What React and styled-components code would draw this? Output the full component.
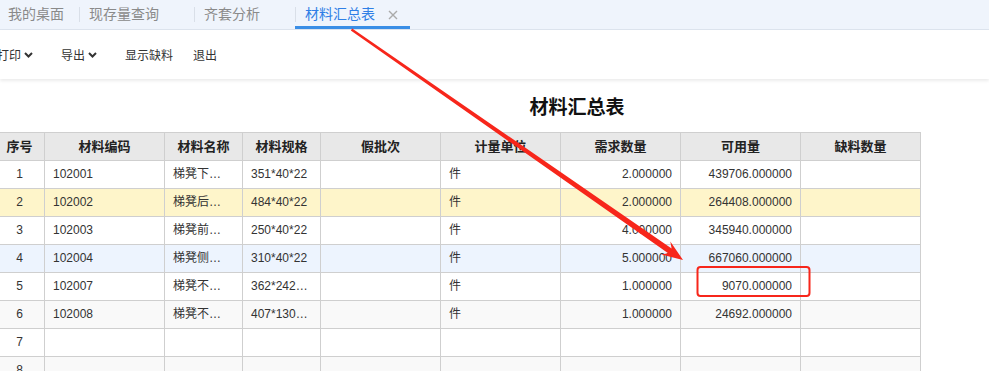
import React from "react";
import styled, { createGlobalStyle } from "styled-components";

const Global = createGlobalStyle`
  html, body { margin: 0; padding: 0; overflow: hidden; background: #fff; }
  body { font-family: "Liberation Sans", "Noto Sans CJK SC", sans-serif; }
`;

const Page = styled.div`
  position: relative;
  width: 989px;
  height: 371px;
  overflow: hidden;
  background: #fff;
`;

const TabBar = styled.div`
  display: flex;
  height: 29px;
  background: #eff4fc;
  border-bottom: 1px solid #dde4ee;
`;

const Tab = styled.div`
  position: relative;
  height: 29px;
  line-height: 29px;
  font-size: 14px;
  white-space: nowrap;
  color: ${(p) => (p.$active ? "#2f7fe6" : "#8a8a8a")};
  padding: ${(p) => (p.$first ? "0 15px 0 8px" : "0 35px 0 10px")};
  &::before {
    content: "";
    display: ${(p) => (p.$first ? "none" : "block")};
    position: absolute;
    left: 0;
    top: 7px;
    width: 1px;
    height: 15px;
    background: #d9dfe8;
  }
  &::after {
    content: "";
    display: ${(p) => (p.$active ? "block" : "none")};
    position: absolute;
    left: 0;
    right: 0;
    bottom: 0;
    height: 3px;
    background: #3a8ee6;
  }
`;

const CloseIcon = styled.svg`
  position: absolute;
  right: 12px;
  top: 10px;
`;

const Toolbar = styled.div`
  position: relative;
  z-index: 1;
  display: flex;
  align-items: center;
  height: 49px;
  background: #fff;
  box-shadow: 0 2px 3px rgba(0, 0, 0, 0.08);
`;

const ToolButton = styled.div`
  display: flex;
  align-items: center;
  font-size: 12px;
  color: #333;
  white-space: nowrap;
  padding: ${(p) => (p.$dropdown ? "0 18px 0 10px" : "0 10px")};
  &:first-child { margin-left: -13px; }
`;

const Chevron = styled.svg`
  margin-left: 3px;
`;

const Report = styled.div`
  width: 1164px;
  margin-left: -5px;
`;

const Title = styled.div`
  height: 53px;
  display: flex;
  align-items: center;
  justify-content: center;
  font-size: 19px;
  font-weight: bold;
  color: #111;
`;

const Grid = styled.div`
  width: 926px;
  border-top: 1px solid #cfcfcf;
`;

const Row = styled.div`
  display: grid;
  grid-template-columns: 50px 120px 78px 78px 120px 120px 120px 120px 120px;
  background: ${(p) => p.$bg || "#fff"};
`;

const Cell = styled.div`
  box-sizing: border-box;
  height: 28px;
  line-height: 27px;
  border-right: 1px solid #cfcfcf;
  border-bottom: 1px solid #cfcfcf;
  font-size: ${(p) => (p.$head ? "13px" : "12px")};
  font-weight: ${(p) => (p.$head ? "bold" : "normal")};
  color: ${(p) => (p.$head ? "#222" : "#333")};
  text-align: ${(p) => p.$align || "left"};
  padding: ${(p) =>
    p.$align === "right" ? "0 8px" : p.$align === "center" ? "0 4px" : "0 11px 0 8px"};
  white-space: nowrap;
  overflow: hidden;
  text-overflow: ellipsis;
  background: ${(p) => (p.$head ? "#e8e8e8" : "transparent")};
`;

const Overlay = styled.svg`
  position: absolute;
  left: 0;
  top: 0;
  pointer-events: none;
  z-index: 5;
`;

const headers = ["序号", "材料编码", "材料名称", "材料规格", "假批次", "计量单位", "需求数量", "可用量", "缺料数量"];

const rows = [
  ["102001", "梯凳下横档", "351*40*22", "件", "2.000000", "439706.000000"],
  ["102002", "梯凳后横档", "484*40*22", "件", "2.000000", "264408.000000"],
  ["102003", "梯凳前横档", "250*40*22", "件", "4.000000", "345940.000000"],
  ["102004", "梯凳侧横档", "310*40*22", "件", "5.000000", "667060.000000"],
  ["102007", "梯凳不锈钢板", "362*242*1.5", "件", "1.000000", "9070.000000"],
  ["102008", "梯凳不锈钢管", "407*130*22", "件", "1.000000", "24692.000000"],
  null,
  null,
];

const rowBg = (i) => {
  if (i === 1) return "#fef5ca";
  if (i === 3) return "#edf4fe";
  if (i % 2 === 1) return "#f9f9f9";
  return "#fff";
};

const ChevronDown = () => (
  <Chevron width="9" height="6" viewBox="0 0 9 6">
    <polyline points="1,1 4.5,4.5 8,1" fill="none" stroke="#333" strokeWidth="2" />
  </Chevron>
);

// Arrow geometry
const S = [351.5, 29.5];
const T = [683, 260];
const dx = T[0] - S[0];
const dy = T[1] - S[1];
const len = Math.hypot(dx, dy);
const u = [dx / len, dy / len];
const n = [-u[1], u[0]];
const pt = (base, a, b) => [base[0] + a * u[0] + b * n[0], base[1] + a * u[1] + b * n[1]];
const arrowPoints = [
  pt(S, 0, -1.2),
  pt(T, -16, -3),
  pt(T, -21, -8),
  T,
  pt(T, -21, 8),
  pt(T, -16, 3),
  pt(S, 0, 1.2),
]
  .map((p) => `${p[0].toFixed(1)},${p[1].toFixed(1)}`)
  .join(" ");

export default function App() {
  return (
    <Page>
      <Global />
      <TabBar>
        <Tab $first>我的桌面</Tab>
        <Tab>现存量查询</Tab>
        <Tab>齐套分析</Tab>
        <Tab $active>
          材料汇总表
          <CloseIcon width="10" height="10" viewBox="0 0 10 10">
            <path d="M1 1 L9 9 M9 1 L1 9" stroke="#aaa" strokeWidth="1.4" />
          </CloseIcon>
        </Tab>
      </TabBar>
      <Toolbar>
        <ToolButton $dropdown>
          打印
          <ChevronDown />
        </ToolButton>
        <ToolButton $dropdown>
          导出
          <ChevronDown />
        </ToolButton>
        <ToolButton>显示缺料</ToolButton>
        <ToolButton>退出</ToolButton>
      </Toolbar>
      <Report>
        <Title>材料汇总表</Title>
        <Grid>
          <Row>
            {headers.map((h) => (
              <Cell key={h} $head $align="center">
                {h}
              </Cell>
            ))}
          </Row>
          {rows.map((r, i) => (
            <Row key={i} $bg={rowBg(i)}>
              <Cell $align="center">{i + 1}</Cell>
              <Cell>{r ? r[0] : ""}</Cell>
              <Cell>{r ? r[1] : ""}</Cell>
              <Cell>{r ? r[2] : ""}</Cell>
              <Cell></Cell>
              <Cell>{r ? r[3] : ""}</Cell>
              <Cell $align="right">{r ? r[4] : ""}</Cell>
              <Cell $align="right">{r ? r[5] : ""}</Cell>
              <Cell></Cell>
            </Row>
          ))}
        </Grid>
      </Report>
      <Overlay width="989" height="371" viewBox="0 0 989 371">
        <polygon points={arrowPoints} fill="#f7261b" />
        <rect x="697.5" y="267" width="112" height="29" rx="3" ry="3" fill="none" stroke="#f7261b" strokeWidth="2" />
      </Overlay>
    </Page>
  );
}
